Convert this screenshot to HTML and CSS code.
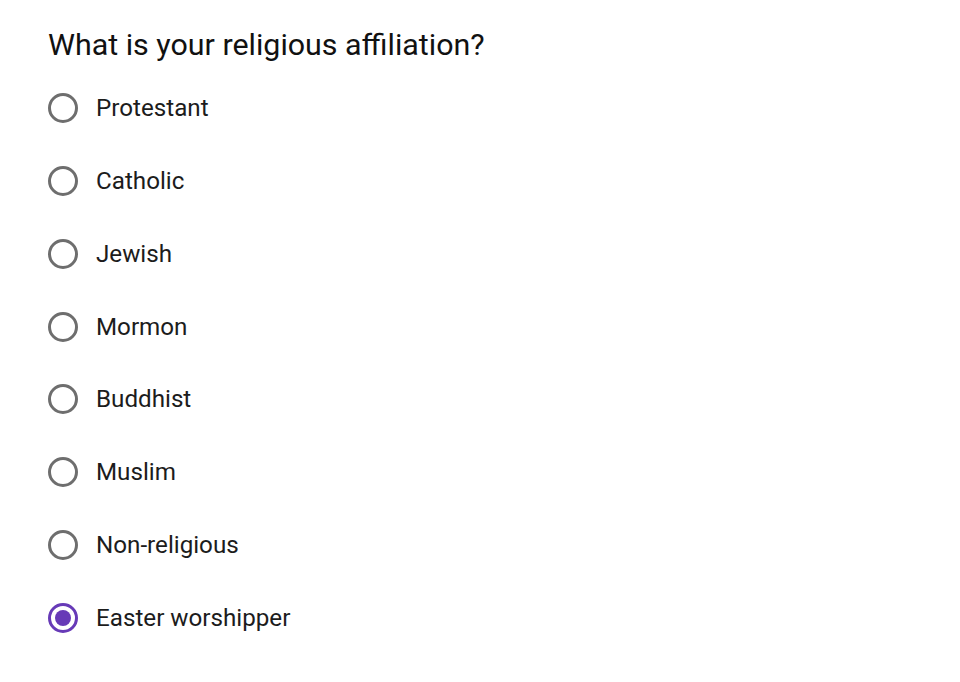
FILE: index.html
```html
<!DOCTYPE html>
<html>
<head>
<meta charset="utf-8">
<link rel="stylesheet" href="styles.css">
</head>
<body>
<div class="form">
  <h1 class="question">What is your religious affiliation?</h1>
  <div class="options">
    <label class="option"><span class="radio"></span><span class="label">Protestant</span></label>
    <label class="option"><span class="radio"></span><span class="label">Catholic</span></label>
    <label class="option"><span class="radio"></span><span class="label">Jewish</span></label>
    <label class="option"><span class="radio"></span><span class="label">Mormon</span></label>
    <label class="option"><span class="radio"></span><span class="label">Buddhist</span></label>
    <label class="option"><span class="radio"></span><span class="label">Muslim</span></label>
    <label class="option"><span class="radio"></span><span class="label">Non-religious</span></label>
    <label class="option selected"><span class="radio"></span><span class="label">Easter worshipper</span></label>
  </div>
</div>
</body>
</html>
```
FILE: styles.css
```css
html, body {
  margin: 0;
  padding: 0;
  background: #ffffff;
}
.form {
  padding: 25px 0 0 48px;
  font-family: Roboto, "Liberation Sans", sans-serif;
  color: #212121;
}
.question {
  margin: 0;
  font-size: 30.4px;
  font-weight: 400;
  line-height: 40px;
  color: #111111;
}
.options {
  display: flex;
  flex-direction: column;
  margin-top: 6.6px;
}
.option {
  display: flex;
  align-items: center;
  height: 72.86px;
}
.radio {
  width: 30px;
  height: 30px;
  box-sizing: border-box;
  border: 3px solid #6e6e6e;
  border-radius: 50%;
  margin-right: 18px;
  position: relative;
  flex: none;
}
.option.selected .radio {
  border-color: #673ab7;
}
.option.selected .radio::after {
  content: "";
  position: absolute;
  left: 4px;
  top: 4px;
  width: 16px;
  height: 16px;
  border-radius: 50%;
  background: #673ab7;
}
.label {
  font-size: 24.2px;
  color: #1c1c1c;
}
```
